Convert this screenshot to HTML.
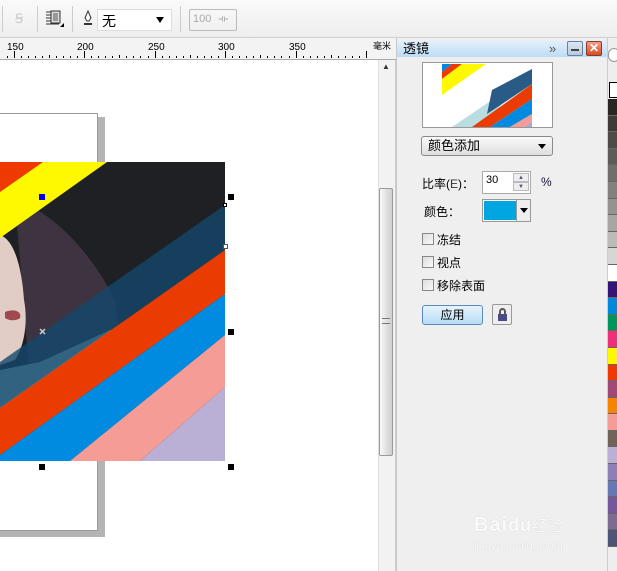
<!DOCTYPE html>
<html><head><meta charset="utf-8">
<style>
*{margin:0;padding:0;box-sizing:border-box}
body{width:617px;height:571px;overflow:hidden;background:#fff;font-family:"Liberation Sans","Noto Sans CJK SC",sans-serif;font-size:12px;position:relative;color:#000}
.abs{position:absolute}
</style></head><body>
<!-- toolbar -->
<div class="abs" style="left:0;top:0;width:617px;height:38px;background:linear-gradient(#fafafa,#eeeeee);border-bottom:1px solid #d0d0d0"></div>
<div class="abs" style="left:2px;top:6px;width:1px;height:26px;background:#ccc"></div>
<div class="abs" style="left:15px;top:11px;color:#c8c8c8;font-size:13px">Ꞩ</div>
<div class="abs" style="left:37px;top:6px;width:1px;height:26px;background:#ccc"></div>
<svg class="abs" style="left:45px;top:10px" width="22" height="20"><g stroke="#333" stroke-width="1"><line x1="1" y1="2" x2="7" y2="2"/><line x1="1" y1="5" x2="7" y2="5"/><line x1="1" y1="8" x2="7" y2="8"/><line x1="1" y1="11" x2="7" y2="11"/><line x1="1" y1="14" x2="14" y2="14"/></g><rect x="6" y="1" width="9" height="12" fill="#ddd" stroke="#333"/><rect x="8" y="3" width="5" height="8" fill="#999"/><path d="M15 17 L19 17 L19 13Z" fill="#000"/></svg>
<div class="abs" style="left:72px;top:6px;width:1px;height:26px;background:#ccc"></div>
<svg class="abs" style="left:82px;top:10px" width="12" height="16"><path d="M6 1 L9 8 L7 11 L5 11 L3 8Z" fill="#fff" stroke="#333"/><line x1="2" y1="14" x2="10" y2="14" stroke="#333" stroke-width="2"/></svg>
<div class="abs" style="left:97px;top:9px;width:75px;height:22px;background:#fff;border:1px solid #ddd;font-size:14px;padding:1px 0 0 4px">无<span style="position:absolute;right:7px;top:7px;border-left:4px solid transparent;border-right:4px solid transparent;border-top:6px solid #000"></span></div>
<div class="abs" style="left:180px;top:6px;width:1px;height:26px;background:#ccc"></div>
<div class="abs" style="left:189px;top:9px;width:48px;height:22px;border:1px solid #bbb;border-radius:2px;color:#aaa;font-size:11px;padding:3px 0 0 3px">100 <span style="margin-left:4px">⟛</span></div>
<!-- ruler -->
<div class="abs" style="left:0;top:38px;width:396px;height:22px;background:#f3f3f3;border-bottom:1px solid #aaa"></div>
<svg class="abs" style="left:0;top:38px" width="396" height="22">
<g font-size="10" font-family="Liberation Sans" fill="#000">
<text x="7" y="12">150</text><text x="77" y="12">200</text><text x="148" y="12">250</text><text x="218" y="12">300</text><text x="289" y="12">350</text>
</g>
<text x="373" y="11" font-size="9" font-family="Noto Sans CJK SC">毫米</text>
<path d="M14.5 13V20M84.5 13V20M155.5 13V20M225.5 13V20M296.5 13V20M366.5 13V20" stroke="#000"/>
<path d="M7.5 18V20M21.5 18V20M28.5 18V20M35.5 18V20M42.5 18V20M49.5 17V20M56.5 18V20M63.5 18V20M70.5 18V20M77.5 18V20M91.5 18V20M98.5 18V20M105.5 18V20M112.5 18V20M119.5 17V20M126.5 18V20M133.5 18V20M140.5 18V20M148.5 18V20M162.5 18V20M169.5 18V20M176.5 18V20M183.5 18V20M190.5 17V20M197.5 18V20M204.5 18V20M211.5 18V20M218.5 18V20M232.5 18V20M239.5 18V20M246.5 18V20M253.5 18V20M260.5 17V20M267.5 18V20M274.5 18V20M281.5 18V20M289.5 18V20M303.5 18V20M310.5 18V20M317.5 18V20M324.5 18V20M331.5 17V20M338.5 18V20M345.5 18V20M352.5 18V20M359.5 18V20" stroke="#000"/>
</svg>
<!-- canvas -->
<div class="abs" style="left:0;top:117px;width:105px;height:420px;background:#b4b4b4"></div>
<div class="abs" style="left:-2px;top:113px;width:100px;height:418px;background:#fff;border:1px solid #999"></div>
<svg class="abs" style="left:0;top:0" width="240" height="480">
<defs><clipPath id="c"><rect x="0" y="162" width="225" height="299"/></clipPath></defs>
<g clip-path="url(#c)">
<rect x="0" y="162" width="225" height="299" fill="#1f2024"/>
<path d="M15 200 C50 210 90 250 115 300 L120 340 L60 400 L30 380 Z" fill="#3e3340"/>
<path d="M0 235 C15 240 22 270 24 300 C28 320 25 345 15 360 L0 365Z" fill="#e2ccc6"/>
<path d="M5 312 C15 308 22 312 20 318 C15 322 8 320 5 318Z" fill="#9e4a50"/>
<path d="M0 370 L40 362 L110 330 L130 330 L0 440Z" fill="#a8d2d6"/>
<path d="M0 162 L43 162 L0 192Z" fill="#ee3a00"/>
<path d="M43 162 L107 162 L0 238 L0 192Z" fill="#fff900"/>
<path d="M225 205 L225 250 L0 408 L0 362Z" fill="#13476b" opacity="0.8"/>
<path d="M225 250 L225 294 L0 455 L0 408Z" fill="#ea3c00"/>
<path d="M225 294 L225 335 L70 461 L0 461 L0 455Z" fill="#008ae0"/>
<path d="M225 335 L225 387 L140 461 L70 461Z" fill="#f69c96"/>
<path d="M225 387 L225 461 L140 461Z" fill="#baafd4"/>
</g>
<g fill="#000"><rect x="228" y="194" width="6" height="6"/><rect x="228" y="329" width="6" height="6"/><rect x="228" y="464" width="6" height="6"/><rect x="39" y="464" width="6" height="6"/></g>
<rect x="39" y="194" width="6" height="6" fill="#0000ee"/>
<rect x="223.5" y="203.5" width="3" height="3" fill="#fff" stroke="#000"/>
<rect x="223.5" y="244.5" width="4" height="4" fill="#fff" stroke="#555"/>
<path d="M40 329 L45 334 M45 329 L40 334" stroke="#ccc" stroke-width="1.5"/>
</svg>
<!-- v scrollbar -->
<div class="abs" style="left:378px;top:60px;width:18px;height:511px;background:#f2f2f2;border-left:1px solid #e0e0e0;border-right:1px solid #ccc"></div>
<div class="abs" style="left:382px;top:62px;font-size:8px;color:#333">▲</div>
<div class="abs" style="left:379px;top:188px;width:14px;height:268px;background:linear-gradient(90deg,#fafafa,#e2e2e2,#cfcfcf);border:1px solid #9a9a9a;border-radius:2px"></div>
<div class="abs" style="left:382px;top:318px;width:8px;height:6px;border-top:1px solid #777;border-bottom:1px solid #777"></div>
<!-- docker -->
<div class="abs" style="left:396px;top:38px;width:211px;height:533px;background:#efefef;border-left:1px solid #c8c8c8"></div>
<div class="abs" style="left:397px;top:40px;width:210px;height:17px;background:linear-gradient(#e6f1fb,#bcdcf4);font-size:13px;padding:0 0 0 6px;line-height:17px">透镜</div>
<div class="abs" style="left:549px;top:40px;font-size:13px;color:#555;line-height:17px">»</div>
<div class="abs" style="left:567px;top:41px;width:16px;height:15px;border:1px solid #6a7f9a;background:linear-gradient(#dde8f4,#b7c9de);border-radius:2px"><div style="position:absolute;left:3px;top:7px;width:8px;height:2px;background:#fff;border:1px solid #444"></div></div>
<div class="abs" style="left:586px;top:41px;width:16px;height:15px;border:1px solid #8a3a2a;background:linear-gradient(#f5a08a,#d84a20);border-radius:2px;color:#fff;font-size:12px;font-weight:bold;text-align:center;line-height:13px">✕</div>
<div class="abs" style="left:422px;top:62px;width:131px;height:66px;background:#fff;border:1px solid #999"></div>
<svg class="abs" style="left:442px;top:64px" width="90" height="63"><defs><clipPath id="p"><rect width="90" height="63"/></clipPath></defs><g clip-path="url(#p)">
<path d="M0 0 L10 0 L0 8Z" fill="#0089dc"/>
<path d="M10 0 L20 0 L0 15 L0 8Z" fill="#ee3a00"/>
<path d="M20 0 L44 0 L0 31 L0 15Z" fill="#fff900"/>
<path d="M10 63 L50 36 L60 40 L40 63Z" fill="#b9dde0"/>
<path d="M50 26 L90 5 L90 20 L45 50Z" fill="#2a5a86"/>
<path d="M90 20 L90 35 L48 63 L30 63Z" fill="#ea3c00"/>
<path d="M90 35 L90 50 L68 63 L48 63Z" fill="#008ae0"/>
<path d="M90 50 L90 58 L82 63 L68 63Z" fill="#f69c96"/>
<path d="M90 58 L90 63 L82 63Z" fill="#a9a6d0"/></g></svg>
<div class="abs" style="left:421px;top:136px;width:132px;height:20px;border:1px solid #8a8a8a;border-radius:3px;background:linear-gradient(#fafafa,#dedede);font-size:13px;padding:0 0 0 6px;line-height:18px">颜色添加<span style="position:absolute;right:6px;top:7px;border-left:4px solid transparent;border-right:4px solid transparent;border-top:5px solid #000"></span></div>
<div class="abs" style="left:422px;top:175px;font-size:12px">比率(<span style="color:#333">E</span>)：</div>
<div class="abs" style="left:482px;top:171px;width:49px;height:23px;border:1px solid #aaa;background:#fff;font-size:11px;padding:2px 0 0 3px">30</div>
<div class="abs" style="left:513px;top:173px;width:16px;height:9px;border:1px solid #bbb;background:#eee;font-size:6px;text-align:center;color:#557;line-height:8px">▲</div>
<div class="abs" style="left:513px;top:182px;width:16px;height:9px;border:1px solid #bbb;background:#eee;font-size:6px;text-align:center;color:#557;line-height:8px">▼</div>
<div class="abs" style="left:541px;top:175px;font-size:12px;color:#113">%</div>
<div class="abs" style="left:424px;top:203px;font-size:12px">颜色：</div>
<div class="abs" style="left:482px;top:199px;width:49px;height:23px;border:1px solid #999;background:#fff"><div style="position:absolute;left:1px;top:1px;width:32px;height:19px;background:#00a6e0"></div><div style="position:absolute;right:0;top:0;width:14px;height:21px;border-left:1px solid #999;background:#eee"><span style="position:absolute;left:3px;top:8px;border-left:4px solid transparent;border-right:4px solid transparent;border-top:5px solid #000"></span></div></div>
<div class="abs" style="left:422px;top:233px;width:12px;height:12px;border:1px solid #888;background:linear-gradient(135deg,#ddd,#fafafa)"></div><div class="abs" style="left:437px;top:231px;font-size:12px">冻结</div>
<div class="abs" style="left:422px;top:256px;width:12px;height:12px;border:1px solid #888;background:linear-gradient(135deg,#ddd,#fafafa)"></div><div class="abs" style="left:437px;top:254px;font-size:12px">视点</div>
<div class="abs" style="left:422px;top:279px;width:12px;height:12px;border:1px solid #888;background:linear-gradient(135deg,#ddd,#fafafa)"></div><div class="abs" style="left:437px;top:277px;font-size:12px">移除表面</div>
<div class="abs" style="left:422px;top:305px;width:61px;height:20px;border:1px solid #5b8cbf;border-radius:3px;background:linear-gradient(#e8f4fc,#b6dcf5);text-align:center;line-height:18px;font-size:12px">应用</div>
<div class="abs" style="left:492px;top:304px;width:20px;height:21px;border:1px solid #999;border-radius:2px;background:#eee"><div style="position:absolute;left:5px;top:9px;width:9px;height:7px;background:#4a4a8a"></div><div style="position:absolute;left:6px;top:3px;width:7px;height:7px;border:2px solid #555;border-bottom:none;border-radius:4px 4px 0 0"></div></div>
<div class="abs" style="left:474px;top:514px;color:#fafafa;font-size:20px;font-weight:bold;text-shadow:0 0 1px #c8c8c8;letter-spacing:1px">Bai<span style="font-size:18px">du</span><span style="font-size:15px;font-weight:normal">经验</span></div>
<div class="abs" style="left:474px;top:540px;color:#fafafa;font-size:11px;text-shadow:0 0 1px #c8c8c8">jingyan.baidu.com</div>
<!-- palette -->
<div class="abs" style="left:607px;top:38px;width:10px;height:533px;background:#eee;border-left:1px solid #ccc"></div>
<div class="abs" style="left:608px;top:48px;width:12px;height:14px;border:1px solid #999;border-radius:7px;background:#fff"></div>
<div class="abs" style="left:609px;top:82px;width:9px;height:16px;border:1px solid #000;background:#fff"></div>
<div class="abs" style="left:608px;top:99px;width:9px">
<div style="height:16.6px;background:#2a2623;border-bottom:1px solid #666"></div>
<div style="height:16.6px;background:#3d3a37;border-bottom:1px solid #666"></div>
<div style="height:16.6px;background:#4d4a47;border-bottom:1px solid #666"></div>
<div style="height:16.6px;background:#5e5c5a;border-bottom:1px solid #666"></div>
<div style="height:16.6px;background:#706e6c;border-bottom:1px solid #666"></div>
<div style="height:16.6px;background:#828180;border-bottom:1px solid #666"></div>
<div style="height:16.6px;background:#949392;border-bottom:1px solid #666"></div>
<div style="height:16.6px;background:#a7a6a5;border-bottom:1px solid #666"></div>
<div style="height:16.6px;background:#bcbbba;border-bottom:1px solid #666"></div>
<div style="height:16.6px;background:#d6d6d5;border-bottom:1px solid #666"></div>
<div style="height:16.6px;background:#ffffff;border-bottom:1px solid #666"></div>
<div style="height:16.6px;background:#33157a;border-bottom:1px solid #666"></div>
<div style="height:16.6px;background:#0089dc;border-bottom:1px solid #666"></div>
<div style="height:16.6px;background:#00955a;border-bottom:1px solid #666"></div>
<div style="height:16.6px;background:#ef2f77;border-bottom:1px solid #666"></div>
<div style="height:16.6px;background:#fff900;border-bottom:1px solid #666"></div>
<div style="height:16.6px;background:#ee3a00;border-bottom:1px solid #666"></div>
<div style="height:16.6px;background:#a14876;border-bottom:1px solid #666"></div>
<div style="height:16.6px;background:#f58400;border-bottom:1px solid #666"></div>
<div style="height:16.6px;background:#f69c96;border-bottom:1px solid #666"></div>
<div style="height:16.6px;background:#716359;border-bottom:1px solid #666"></div>
<div style="height:16.6px;background:#bcafd5;border-bottom:1px solid #666"></div>
<div style="height:16.6px;background:#8f7fb7;border-bottom:1px solid #666"></div>
<div style="height:16.6px;background:#6577b5;border-bottom:1px solid #666"></div>
<div style="height:16.6px;background:#75579e;border-bottom:1px solid #666"></div>
<div style="height:16.6px;background:#7a6d91;border-bottom:1px solid #666"></div>
<div style="height:16.6px;background:#4e5478;border-bottom:1px solid #666"></div>
</div>
</body></html>
